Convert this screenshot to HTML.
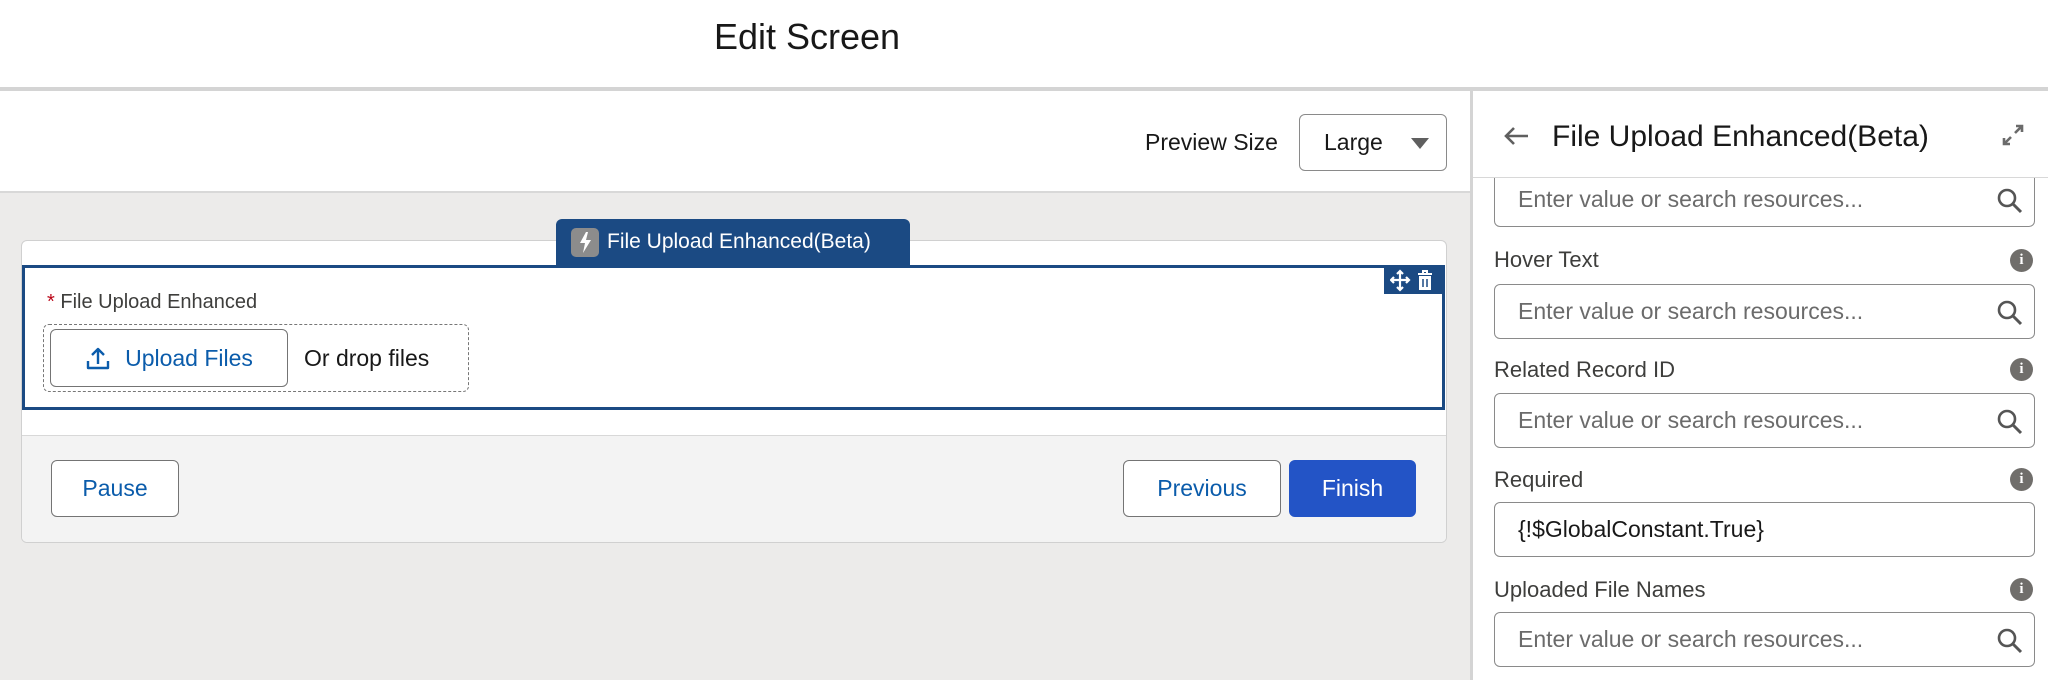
<!DOCTYPE html>
<html><head><style>
*{box-sizing:border-box;margin:0;padding:0}
body{width:2048px;height:680px;overflow:hidden;background:#fff;font-family:"Liberation Sans",Arial,sans-serif;color:#181818;position:relative}
.a{position:absolute}
.btn{position:absolute;border:1px solid #747474;border-radius:6px;background:#fff;color:#0b5cab;font-size:23px;display:flex;align-items:center;justify-content:center}
.inp{position:absolute;left:1494px;width:541px;height:55px;border:1.5px solid #8a8a8a;border-radius:6px;background:#fff;font-size:23px;color:#6b6b6b;padding-left:23px;display:flex;align-items:center}
.lbl{position:absolute;left:1494px;font-size:22px;color:#3e3e3c}
.info{position:absolute;left:2010px;width:23px;height:23px;border-radius:50%;background:#706e6b;color:#fff;font-size:15px;font-weight:bold;font-family:"Liberation Serif",serif;text-align:center;line-height:23px}
.srch{position:absolute;right:10px;top:14px}
</style></head><body>
<div class="a" style="left:0;top:0;width:2048px;height:88px;background:#fff"></div>
<div class="a" style="left:0;top:16px;width:1614px;text-align:center;font-size:36px">Edit Screen</div>
<div class="a" style="left:0;top:87px;width:2048px;height:4px;background:#d4d4d4"></div>
<!-- preview bar -->
<div class="a" style="left:0;top:91px;width:1470px;height:102px;background:#fff;border-bottom:2px solid #d8d8d8"></div>
<div class="a" style="left:1145px;top:129px;font-size:23px">Preview Size</div>
<div class="a" style="left:1299px;top:114px;width:148px;height:57px;border:1.5px solid #8a8a8a;border-radius:6px;background:#fff;font-size:23px;padding:14px 0 0 24px">Large</div>
<div class="a" style="left:1411px;top:138px;width:0;height:0;border-left:9px solid transparent;border-right:9px solid transparent;border-top:11px solid #5f5f5f"></div>
<div class="a" style="left:0;top:193px;width:1470px;height:487px;background:#ecebea"></div>
<!-- card -->
<div class="a" style="left:21px;top:240px;width:1426px;height:303px;background:#fff;border:1.5px solid #d0d0d0;border-radius:6px;overflow:hidden">
 <div class="a" style="left:0;top:194px;width:1426px;height:110px;background:#f3f3f3;border-top:1.5px solid #d8d8d8"></div>
</div>
<div class="a" style="left:556px;top:219px;width:354px;height:48px;background:#1b4a83;border-radius:6px 6px 0 0"></div>
<div class="a" style="left:571px;top:228px;width:28px;height:29px;background:#8c8c8c;border-radius:5px"></div>
<svg class="a" style="left:577px;top:231px" width="16" height="23" viewBox="0 0 16 23"><path d="M9 1L3 12h5l-2 10 8-13H9l2-8z" fill="#fff"/></svg>
<div class="a" style="left:607px;top:230px;color:#fff;font-size:21px">File Upload Enhanced(Beta)</div>
<div class="a" style="left:22px;top:265px;width:1423px;height:145px;border:3.5px solid #1b4a83;background:#fff"></div>
<div class="a" style="left:1384px;top:267px;width:60px;height:27px;background:#1b4a83"></div>
<svg class="a" style="left:1390px;top:269px" width="48" height="23" viewBox="0 0 48 23"><path d="M10 2v19M1 11h18M7 5l3-3 3 3M7 18l3 3 3-3M4 8l-3 3 3 3M16 8l3 3-3 3" fill="none" stroke="#fff" stroke-width="2.2"/><path d="M28 5h14M33 5V2h4v3" fill="none" stroke="#fff" stroke-width="2"/><path d="M29 7h12v14H29z" fill="#fff"/><path d="M33 10v8M37 10v8" stroke="#1b4a83" stroke-width="1.5"/></svg>
<div class="a" style="left:47px;top:291px;font-size:20px;color:#3e3e3c"><span style="color:#ba0517">*</span> File Upload Enhanced</div>
<div class="a" style="left:43px;top:324px;width:426px;height:68px;border:1.5px dashed #777;border-radius:6px"></div>
<div class="btn" style="left:50px;top:329px;width:238px;height:58px">
<svg width="26" height="26" viewBox="0 0 26 26" style="margin-right:14px"><path d="M13 19V4M7 10l6-6 6 6M3 16v7h20v-7" fill="none" stroke="#0b5cab" stroke-width="2.4" stroke-linejoin="round"/></svg>Upload Files</div>
<div class="a" style="left:304px;top:345px;font-size:23px">Or drop files</div>
<div class="btn" style="left:51px;top:460px;width:128px;height:57px">Pause</div>
<div class="btn" style="left:1123px;top:460px;width:158px;height:57px">Previous</div>
<div class="btn" style="left:1289px;top:460px;width:127px;height:57px;background:#2354c6;border-color:#2354c6;color:#fff">Finish</div>
<!-- right panel -->
<div class="a" style="left:1470px;top:91px;width:578px;height:589px;background:#fff;border-left:3px solid #d4d4d4"></div>
<div class="inp" style="top:172px">Enter value or search resources...<svg class="srch" width="28" height="28" viewBox="0 0 28 28"><circle cx="11" cy="11" r="8" fill="none" stroke="#555" stroke-width="2.6"/><path d="M17 17l8 8" stroke="#555" stroke-width="3"/></svg></div>
<div class="a" style="left:1473px;top:91px;width:575px;height:87px;background:#fff;border-bottom:1.5px solid #d8d8d8"></div>
<svg class="a" style="left:1502px;top:124px" width="28" height="24" viewBox="0 0 28 24"><path d="M26 12H4M12 4l-8 8 8 8" fill="none" stroke="#5f5f5f" stroke-width="2.6"/></svg>
<div class="a" style="left:1552px;top:120px;font-size:30px">File Upload Enhanced(Beta)</div>
<svg class="a" style="left:2002px;top:124px" width="22" height="22" viewBox="0 0 22 22"><path d="M13 9l7-7M14 2h6v6M9 13l-7 7M2 14v6h6" fill="none" stroke="#6b6b6b" stroke-width="2.6"/></svg>
<div class="lbl" style="top:247px">Hover Text</div><div class="info" style="top:249px">i</div>
<div class="inp" style="top:284px">Enter value or search resources...<svg class="srch" width="28" height="28" viewBox="0 0 28 28"><circle cx="11" cy="11" r="8" fill="none" stroke="#555" stroke-width="2.6"/><path d="M17 17l8 8" stroke="#555" stroke-width="3"/></svg></div>
<div class="lbl" style="top:357px">Related Record ID</div><div class="info" style="top:358px">i</div>
<div class="inp" style="top:393px">Enter value or search resources...<svg class="srch" width="28" height="28" viewBox="0 0 28 28"><circle cx="11" cy="11" r="8" fill="none" stroke="#555" stroke-width="2.6"/><path d="M17 17l8 8" stroke="#555" stroke-width="3"/></svg></div>
<div class="lbl" style="top:467px">Required</div><div class="info" style="top:468px">i</div>
<div class="inp" style="top:502px;color:#181818">{!$GlobalConstant.True}</div>
<div class="lbl" style="top:577px">Uploaded File Names</div><div class="info" style="top:578px">i</div>
<div class="inp" style="top:612px">Enter value or search resources...<svg class="srch" width="28" height="28" viewBox="0 0 28 28"><circle cx="11" cy="11" r="8" fill="none" stroke="#555" stroke-width="2.6"/><path d="M17 17l8 8" stroke="#555" stroke-width="3"/></svg></div>
</body></html>
